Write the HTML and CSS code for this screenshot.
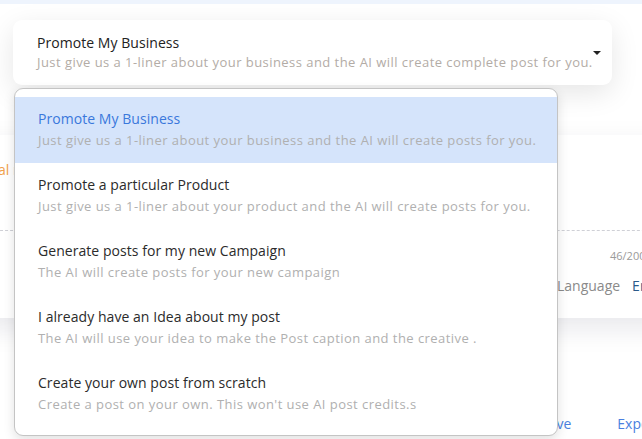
FILE: index.html
```html
<!DOCTYPE html>
<html>
<head>
<meta charset="utf-8">
<link rel="stylesheet" href="styles.css">
</head>
<body>
<div class="topbar"></div>
<div class="stage">
  <div class="select">
    <div class="select-text">
      <div class="select-title">Promote My Business</div>
      <div class="select-sub">Just give us a 1-liner about your business and the AI will create complete post for you.</div>
    </div>
    <div class="caret"></div>
  </div>

  <div class="card">
    <div class="card-head"><span class="c-or">al</span> <span class="c-pu">m</span></div>
    <div class="dash"></div>
    <div class="count-row"><span class="count">46/200</span></div>
    <div class="lang-row"><span class="lang">Language</span><span class="lang-val">English</span></div>
  </div>

  <div class="links"><span class="link-a">Save</span><span class="link-b">Export</span></div>

  <ul class="menu">
    <li class="item active">
      <div class="item-title">Promote My Business</div>
      <div class="item-sub">Just give us a 1-liner about your business and the AI will create posts for you.</div>
    </li>
    <li class="item">
      <div class="item-title">Promote a particular Product</div>
      <div class="item-sub">Just give us a 1-liner about your product and the AI will create posts for you.</div>
    </li>
    <li class="item">
      <div class="item-title">Generate posts for my new Campaign</div>
      <div class="item-sub">The AI will create posts for your new campaign</div>
    </li>
    <li class="item">
      <div class="item-title">I already have an Idea about my post</div>
      <div class="item-sub">The AI will use your idea to make the Post caption and the creative .</div>
    </li>
    <li class="item">
      <div class="item-title">Create your own post from scratch</div>
      <div class="item-sub">Create a post on your own. This won't use AI post credits.s</div>
    </li>
  </ul>
</div>
</body>
</html>
```

FILE: styles.css
```css
html, body {
  margin: 0;
  padding: 0;
  background: #ffffff;
  overflow: hidden;
  font-family: "Open Sans", "Noto Sans", sans-serif;
}

.topbar {
  height: 4px;
  background: #eef4fd;
}

.stage {
  position: relative;
  height: 435px;
  padding-top: 16px;
  box-sizing: border-box;
}

.select {
  margin: 0 0 0 13px;
  width: 599px;
  height: 65px;
  box-sizing: border-box;
  background: #fff;
  border-radius: 9px;
  box-shadow: 0 8px 28px rgba(0, 0, 0, 0.10);
  display: flex;
  align-items: center;
  padding: 0 11px 0 24px;
  position: relative;
  z-index: 2;
}

.select-text {
  flex: 1;
}

.select-title {
  font-size: 14px;
  letter-spacing: 0.05px;
  color: #222;
  line-height: 19px;
}

.select-sub {
  font-size: 13px;
  letter-spacing: 0.45px;
  color: #b3aca6;
  line-height: 20px;
  white-space: nowrap;
}

.caret {
  width: 0;
  height: 0;
  border-left: 4px solid transparent;
  border-right: 4px solid transparent;
  border-top: 4px solid #222;
  margin-top: 0;
}

.card {
  margin: 50px 0 0 -20px;
  width: 700px;
  height: 183px;
  background: #fff;
  box-shadow: 0 10px 26px rgba(20, 20, 60, 0.10);
  display: flex;
  flex-direction: column;
  position: relative;
  z-index: 1;
}

.card-head {
  height: 70px;
  padding: 25px 0 0 18px;
  box-sizing: border-box;
  font-size: 14px;
}

.c-or { color: #f0a04a; }
.c-pu { color: #7a5cb8; }

.dash {
  margin-top: 25px;
  border-top: 1px dashed #cfd0d6;
}

.count-row {
  padding: 17px 0 0 630px;
  font-size: 11px;
  color: #9a9a9a;
  height: 42px;
  box-sizing: border-box;
}

.lang-row {
  padding: 3px 0 0 577px;
  font-size: 14px;
  color: #8a8a8a;
  display: flex;
  gap: 12px;
}

.lang-val {
  color: #2a5a8a;
}

.links {
  margin: 96px 0 0 541px;
  display: flex;
  gap: 46px;
  font-size: 14px;
  color: #4a7fe0;
}

.menu {
  position: absolute;
  top: 84px;
  left: 14px;
  width: 544px;
  box-sizing: border-box;
  margin: 0;
  padding: 8px 0 0;
  height: 348px;
  list-style: none;
  background: #fff;
  border: 1px solid #c4c4c4;
  border-radius: 9px;
  box-shadow: 0 4px 12px rgba(0, 0, 0, 0.12);
  z-index: 5;
}

.item {
  height: 66px;
  padding: 12px 0 0 23px;
  box-sizing: border-box;
}

.item.active {
  background: #d5e4fb;
}

.item-title {
  font-size: 14px;
  letter-spacing: 0.05px;
  line-height: 20px;
  color: #2b2b2b;
}

.item.active .item-title {
  color: #3a78dc;
}

.item-sub {
  font-size: 13px;
  letter-spacing: 0.45px;
  line-height: 22px;
  color: #b0b0b0;
  white-space: nowrap;
}
```
